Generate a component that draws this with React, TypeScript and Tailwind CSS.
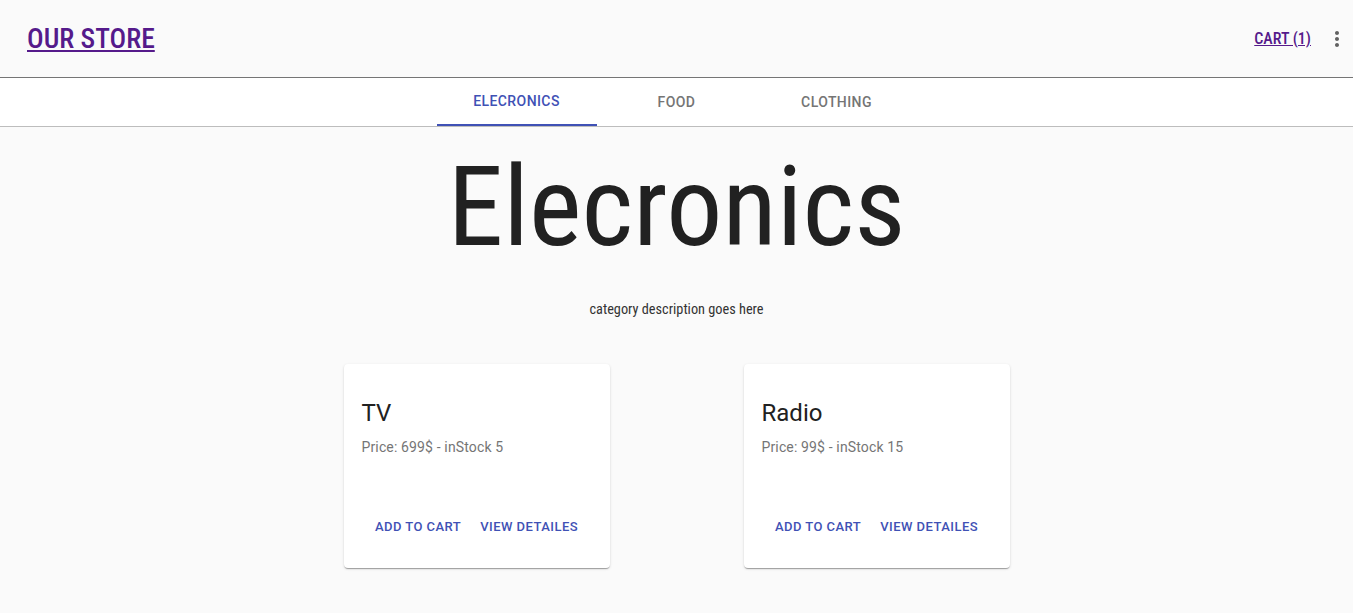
import React from "react";

function MoreVert() {
  return (
    <svg width="24" height="24" viewBox="0 0 24 24" fill="#616161">
      <path d="M12 8c1.1 0 2-.9 2-2s-.9-2-2-2-2 .9-2 2 .9 2 2 2zm0 2c-1.1 0-2 .9-2 2s.9 2 2 2 2-.9 2-2-.9-2-2-2zm0 6c-1.1 0-2 .9-2 2s.9 2 2 2 2-.9 2-2-.9-2-2-2z" />
    </svg>
  );
}

function Card({ title, price, stock }: { title: string; price: string; stock: number }) {
  return (
    <div className="w-[266px] h-[204px] bg-white rounded-[4px] shadow-[0_2px_1px_-1px_rgba(0,0,0,0.2),0_1px_1px_0_rgba(0,0,0,0.14),0_1px_3px_0_rgba(0,0,0,0.12)] flex flex-col">
      <div className="px-[18px] pt-[33px]">
        <div className="text-[24px] leading-[32px] text-[#212121]">{title}</div>
        <div className="mt-[8px] text-[14px] leading-[20px] text-[#757575] tracking-[0.01em]">
          Price: {price} - inStock {stock}
        </div>
      </div>
      <div className="mt-auto mb-[24px] flex justify-center gap-[3px]">
        <button className="h-[36px] px-[8px] text-[13px] font-medium tracking-[0.035em] uppercase text-[#3f51b5]">Add to cart</button>
        <button className="h-[36px] px-[8px] text-[13px] font-medium tracking-[0.035em] uppercase text-[#3f51b5]">View detailes</button>
      </div>
    </div>
  );
}

export default function App() {
  return (
    <div className="min-h-[613px] bg-[#fafafa] font-['Roboto',sans-serif]">
      <header className="h-[78px] flex items-center justify-between pl-[27px] pr-[4px] border-b border-[#757575] bg-[#fafafa]">
        <a href="#" className="text-[27.6px] font-medium text-[#551a8b] underline [font-stretch:condensed] leading-none">OUR STORE</a>
        <div className="flex items-center gap-[14px]">
          <a href="#" className="text-[16px] font-medium text-[#551a8b] underline [font-stretch:condensed]">CART (1)</a>
          <MoreVert />
        </div>
      </header>
      <nav className="h-[49px] bg-white border-b border-[#bdbdbd] flex justify-center">
        <div className="w-[160px] flex items-center justify-center text-[14px] font-medium uppercase tracking-[0.03em] text-[#3f51b5] border-b-2 border-[#3f51b5]">Elecronics</div>
        <div className="w-[160px] flex items-center justify-center text-[14px] font-medium uppercase tracking-[0.03em] text-[#757575]">Food</div>
        <div className="w-[160px] flex items-center justify-center text-[14px] font-medium uppercase tracking-[0.03em] text-[#757575]">Clothing</div>
      </nav>
      <main className="flex flex-col items-center">
        <h1 className="mt-[10px] text-[112px] leading-[140px] font-normal text-[#212121] [font-stretch:condensed]">Elecronics</h1>
        <p className="mt-[22px] text-[14.3px] text-[#333] [font-stretch:condensed]">category description goes here</p>
        <div className="mt-[44px] flex gap-[134px]">
          <Card title="TV" price="699$" stock={5} />
          <Card title="Radio" price="99$" stock={15} />
        </div>
      </main>
    </div>
  );
}
